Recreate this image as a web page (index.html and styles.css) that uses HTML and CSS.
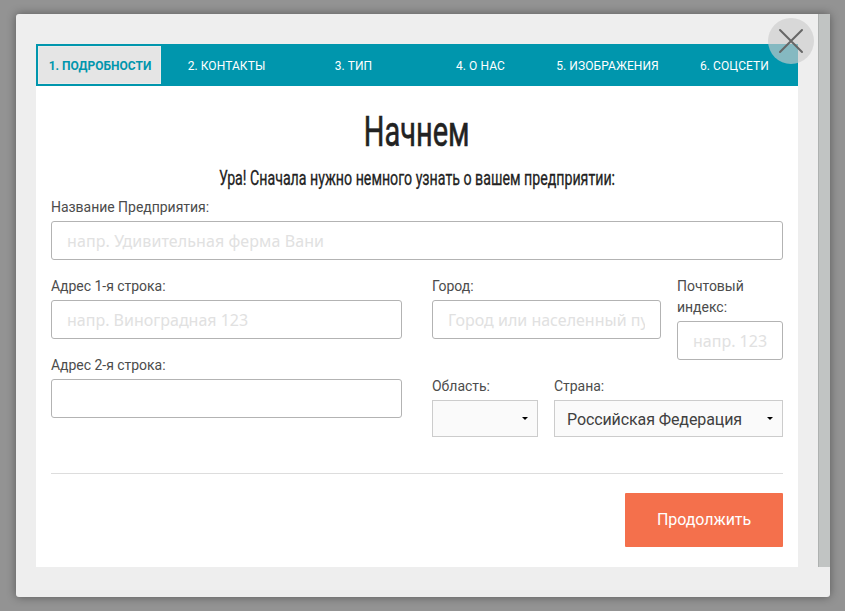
FILE: index.html
```html
<!DOCTYPE html>
<html lang="ru">
<head>
<meta charset="utf-8">
<title>Регистрация предприятия</title>
<link rel="stylesheet" href="styles.css">
</head>
<body>
<div class="modal">
  <div class="scroll-area">
    <main class="panel">
      <nav class="tabs">
        <a class="tab active">1. ПОДРОБНОСТИ</a>
        <a class="tab">2. КОНТАКТЫ</a>
        <a class="tab">3. ТИП</a>
        <a class="tab">4. О НАС</a>
        <a class="tab">5. ИЗОБРАЖЕНИЯ</a>
        <a class="tab">6. СОЦСЕТИ</a>
      </nav>
      <form class="form">
        <h2 class="title"><span class="narrow">Начнем</span></h2>
        <h5 class="subtitle"><span class="narrow">Ура! Сначала нужно немного узнать о вашем предприятии:</span></h5>
        <div class="field">
          <label for="name">Название Предприятия:</label>
          <input id="name" class="wide" type="text" placeholder="напр. Удивительная ферма Вани">
        </div>
        <div class="columns">
          <div class="column">
            <div class="field">
              <label for="address1">Адрес 1-я строка:</label>
              <input id="address1" type="text" placeholder="напр. Виноградная 123">
            </div>
            <div class="field">
              <label for="address2">Адрес 2-я строка:</label>
              <input id="address2" type="text">
            </div>
          </div>
          <div class="column">
            <div class="city-row">
              <div class="field">
                <label for="city">Город:</label>
                <input id="city" type="text" placeholder="Город или населенный пункт">
              </div>
              <div class="field">
                <label for="zip">Почтовый индекс:</label>
                <input id="zip" type="text" placeholder="напр. 123456">
              </div>
            </div>
            <div class="country-row">
              <div class="field">
                <label>Область:</label>
                <div class="select"><span></span><svg class="caret" viewBox="0 0 6 3"><path d="M0 0h6L3 3z"/></svg></div>
              </div>
              <div class="field">
                <label>Страна:</label>
                <div class="select"><span>Российская Федерация</span><svg class="caret" viewBox="0 0 6 3"><path d="M0 0h6L3 3z"/></svg></div>
              </div>
            </div>
          </div>
        </div>
        <div class="actions"><button class="submit" type="button">Продолжить</button></div>
      </form>
    </main>
    <div class="scrollbar"></div>
  </div>
  <a class="close"><svg viewBox="0 0 46 46"><path d="M12 12l22 22M34 12L12 34"/></svg></a>
</div>
</body>
</html>
```
FILE: styles.css
```css
* { box-sizing: border-box; }
body {
  margin: 0;
  height: 611px;
  padding: 14px 15px 14px 16px;
  overflow: hidden;
  background: #939393;
  font-family: Roboto, sans-serif;
  color: #4c4c4c;
}
.modal {
  position: relative;
  height: 583px;
  background: #eee;
  border-radius: 3px;
  box-shadow: 0 0 10px rgba(0, 0, 0, .4);
}
.scroll-area { display: flex; justify-content: space-between; height: 553px; }
.panel { width: 762px; margin: 30px 0 0 20px; background: #fff; }
.scrollbar { width: 12px; background: #c1c4c3; border-left: 1px solid #aeb1b0; }
.close {
  position: absolute;
  top: 4px;
  right: 16px;
  width: 46px;
  height: 46px;
  border-radius: 50%;
  background: rgba(204, 204, 204, .65);
}
.close svg { display: block; fill: none; stroke: #666; stroke-width: 2; stroke-linecap: round; }
.tabs { display: grid; grid-template-columns: repeat(6, 1fr); height: 42px; background: #0096ad; }
.tab {
  height: 42px;
  border: 2px solid #0096ad;
  color: #fff;
  font-size: 12px;
  line-height: 40px;
  letter-spacing: .08px;
  text-align: center;
  white-space: nowrap;
}
.tab.active {
  padding-left: 1px;
  background: #e5e5e5;
  color: #0096ad;
  font-weight: 700;
  letter-spacing: 0;
  box-shadow: inset 0 0 0 1px #ebebeb;
}
.form { padding: 0 15px; }
h2, h5 { margin: 0; font-weight: 400; color: #222; text-align: center; white-space: nowrap; }
.title { padding-top: 17px; font-size: 42px; line-height: 58px; height: 75px; }
.subtitle { font-size: 20px; line-height: 34px; height: 36px; }
.narrow { display: inline-block; }
.title .narrow { transform: scaleX(.69); -webkit-text-stroke: .6px #222; }
.subtitle .narrow { transform: scaleX(.71); margin: 0 -100px; -webkit-text-stroke: .3px #222; }
.field { min-width: 0; margin-bottom: 16px; }
label { display: block; margin-bottom: 3px; font-size: 14px; line-height: 21px; letter-spacing: -.03px; }
input {
  display: block;
  width: 100%;
  height: 39px;
  padding: 0 15px;
  border: 1px solid #b3b3b3;
  border-radius: 3px;
  background: #fff;
  font: 16px "Noto Sans", sans-serif;
}
input.wide { letter-spacing: .09px; }
input::placeholder { color: #e1e1e1; opacity: 1; }
.columns { display: grid; grid-template-columns: 1fr 1fr; gap: 30px; height: 197px; }
.city-row { display: grid; grid-template-columns: 229px 106px; gap: 16px; }
.country-row { display: grid; grid-template-columns: 106px 229px; gap: 16px; }
.select {
  display: flex;
  align-items: center;
  justify-content: space-between;
  height: 37px;
  padding: 1px 9px 0 12px;
  border: 1px solid #ccc;
  background: #fafafa;
  font-size: 16px;
  letter-spacing: -.1px;
  color: #404040;
}
.caret { width: 6px; height: 3px; margin-top: -2px; fill: #000; }
.actions { display: flex; justify-content: flex-end; padding-top: 19px; border-top: 1px solid #ddd; }
.submit {
  width: 158px;
  height: 54px;
  padding: 0 0 2px;
  border: 0;
  border-radius: 1px;
  background: #f4704c;
  color: #fff;
  font: 16px Roboto, sans-serif;
  letter-spacing: -.05px;
}
```
